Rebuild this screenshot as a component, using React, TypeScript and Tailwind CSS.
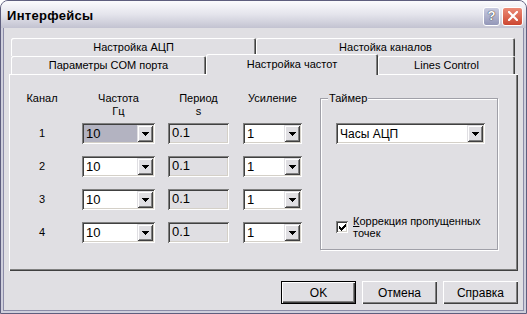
import React from 'react'

// Classic Win32 bevels
const raised = 'shadow-[inset_1px_1px_0_#fff,inset_-1px_-1px_0_#404040,inset_-2px_-2px_0_#808080]'
const sunken =
  'shadow-[inset_1px_1px_0_#808080,inset_-1px_-1px_0_#fff,inset_2px_2px_0_#404040,inset_-2px_-2px_0_#d4d0c8]'

function Arrow() {
  return (
    <svg width="7" height="4" viewBox="0 0 7 4" shapeRendering="crispEdges">
      <path d="M0 0h7L3.5 4z" fill="#000" />
    </svg>
  )
}

function DropButton() {
  return (
    <div className="flex w-[16px] shrink-0 items-center justify-center bg-[#e0dfe3] shadow-[inset_1px_1px_0_#e0dfe3,inset_-1px_-1px_0_#404040,inset_2px_2px_0_#fff,inset_-2px_-2px_0_#808080]">
      <Arrow />
    </div>
  )
}

function Combo({
  value,
  className,
  selected = false,
  small = false,
}: {
  value: string
  className: string
  selected?: boolean
  small?: boolean
}) {
  return (
    <div className={`flex h-[21px] bg-white p-[2px] ${sunken} ${className}`}>
      <div
        className={`flex flex-1 items-center pl-[2px] ${small ? 'text-[12px]' : 'text-[13px]'} ${
          selected ? 'bg-[#b3b3c1]' : ''
        }`}
      >
        {value}
      </div>
      <DropButton />
    </div>
  )
}

function Tab({ label, className }: { label: string; className: string }) {
  return (
    <div
      className={`flex items-center justify-center rounded-t-[2px] bg-[#e0dfe3] text-[11px] shadow-[inset_1px_1px_0_#fff,inset_-1px_0_0_#404040,inset_-2px_0_0_#808080] ${className}`}
    >
      {label}
    </div>
  )
}

function Button({ label, isDefault = false }: { label: string; isDefault?: boolean }) {
  if (isDefault) {
    return (
      <div className="h-[23px] w-[75px] border border-black">
        <div className={`flex h-full items-center justify-center bg-[#e0dfe3] text-[12px] ${raised}`}>{label}</div>
      </div>
    )
  }
  return (
    <div className={`flex h-[23px] w-[75px] items-center justify-center bg-[#e0dfe3] text-[12px] ${raised}`}>
      {label}
    </div>
  )
}

const rows = ['1', '2', '3', '4']

export default function App() {
  return (
    <div className="flex h-[314px] w-[527px] flex-col overflow-hidden rounded-t-[8px] border border-[#5e5e7e] bg-[#cfcfdc] font-['Liberation_Sans',Arial,sans-serif] text-black">
      {/* Title bar */}
      <div className="flex h-[27px] shrink-0 items-center bg-gradient-to-b from-[#fbfbfd] via-[#e4e4ec] to-[#c3c3d1] pl-[6px] pr-[3px] pt-[3px]">
        <span className="flex-1 text-[13px] font-bold tracking-[0.3px]">Интерфейсы</span>
        <div className="flex gap-[2px]">
          <div className="flex h-[19px] w-[17px] items-center justify-center rounded-[3px] border border-white bg-gradient-to-b from-[#c9cbe0] to-[#9397b8] text-[13px] font-bold text-white [text-shadow:0_0_1px_#333,0_0_1px_#333]">
            ?
          </div>
          <div className="flex h-[19px] w-[21px] items-center justify-center rounded-[3px] border border-white bg-gradient-to-b from-[#eb8a76] to-[#cc4530]">
            <svg width="10" height="10" viewBox="0 0 10 10">
              <path d="M1 1l8 8M9 1l-8 8" stroke="#fff" strokeWidth="2.2" strokeLinecap="square" />
            </svg>
          </div>
        </div>
      </div>

      {/* Body */}
      <div className="mx-[2px] mb-[2px] flex flex-1 flex-col border-x border-b border-[#8c8ca8] bg-[#e0dfe3] px-[5px] pt-[10px]">
        {/* Tabs */}
        <div className="ml-[2px] flex h-[18px]">
          <Tab label="Настройка АЦП" className="w-[245px]" />
          <Tab label="Настойка каналов" className="w-[259px]" />
        </div>
        <div className="ml-[2px] flex h-[18px]">
          <Tab label="Параметры COM порта" className="h-[18px] w-[195px]" />
          <Tab label="Настройка частот" className="relative z-10 -mb-[1px] -mt-[2px] h-[21px] w-[172px] pb-[1px]" />
          <Tab label="Lines Control" className="h-[18px] w-[137px]" />
        </div>

        {/* Panel */}
        <div className={`flex h-[197px] bg-[#e0dfe3] pl-[1px] ${raised}`}>
          <div className="flex flex-col pt-[18px] text-[11px]">
            <div className="flex leading-[13px]">
              <div className="w-[64px] text-center">Канал</div>
              <div className="ml-[8px] w-[73px] text-center">
                Частота
                <br />
                Гц
              </div>
              <div className="ml-[13px] w-[61px] text-center">
                Период
                <br />s
              </div>
              <div className="ml-[14px] w-[59px] text-center">Усиление</div>
            </div>
            <div className="mt-[5px] flex flex-col gap-[12px]">
              {rows.map((n, i) => (
                <div key={n} className="flex h-[21px] items-center">
                  <div className="w-[64px] text-center">{n}</div>
                  <Combo value="10" selected={i === 0} className="ml-[8px] w-[73px]" />
                  <div className={`ml-[13px] h-[21px] w-[61px] bg-[#e0dfe3] pl-[4px] pt-[2px] text-[13px] leading-[15px] ${sunken}`}>
                    0.1
                  </div>
                  <Combo value="1" className="ml-[14px] w-[59px]" />
                </div>
              ))}
            </div>
          </div>

          {/* Timer group */}
          <div className="relative ml-[18px] mt-[24px] flex h-[152px] w-[178px] flex-col border border-[#a0a0a8] pb-[10px] pl-[15px] pr-[12px] pt-[24px] shadow-[inset_1px_1px_0_#fff,1px_1px_0_#fff]">
            <span className="absolute -top-[7px] left-[7px] bg-[#e0dfe3] px-[1px] text-[11px] leading-[12px]">Таймер</span>
            <Combo value="Часы АЦП" small className="w-full" />
            <div className="mt-auto flex items-center gap-[5px]">
              <div className={`flex h-[12px] w-[12px] shrink-0 items-center justify-center bg-white ${sunken}`}>
                <svg width="7" height="7" viewBox="0 0 7 7" shapeRendering="crispEdges">
                  <path d="M0 2h1v1h1v1h1V3h1V2h1V1h1V0h1v3H6v1H5v1H4v1H3v1H2V6H1V5H0z" fill="#000" />
                </svg>
              </div>
              <div className="text-[11px] leading-[12px]">
                <span className="underline">К</span>оррекция пропущенных
                <br />
                точек
              </div>
            </div>
          </div>
        </div>

        {/* Dialog buttons */}
        <div className="mt-[10px] flex justify-end gap-[6px]">
          <Button label="OK" isDefault />
          <Button label="Отмена" />
          <Button label="Справка" />
        </div>
      </div>
    </div>
  )
}
